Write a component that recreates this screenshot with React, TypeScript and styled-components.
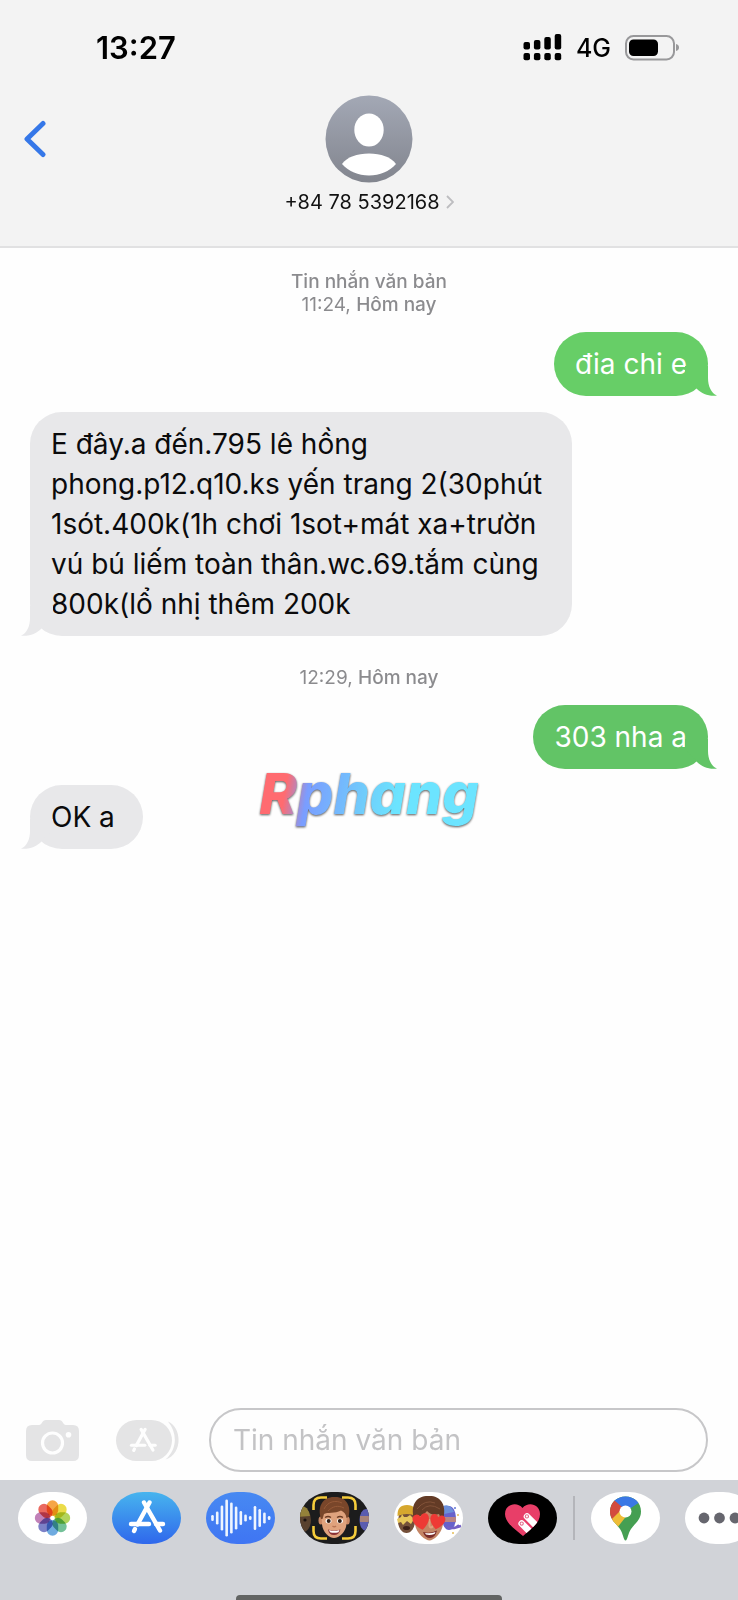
import React from "react";
import styled, { createGlobalStyle } from "styled-components";

const GlobalStyle = createGlobalStyle`
  * { box-sizing: border-box; }
  body { margin: 0; background: #fefefe; }
  button, input { font: inherit; }
`;

const Screen = styled.div`
  position: relative;
  display: flex;
  flex-direction: column;
  min-height: 100vh;
  overflow: hidden;
  background: #fefefe;
  color: #0b0b0c;
  font-family: Inter, "Liberation Sans", sans-serif;
`;

const Header = styled.header`
  display: flex;
  flex-direction: column;
  background: #f3f3f3;
  border-bottom: 2px solid #e1e1e2;
  padding-bottom: 32px;
`;

const StatusBar = styled.div`
  display: flex;
  align-items: center;
  justify-content: space-between;
  height: 95px;
  padding: 0 58px 0 96px;
`;

const Clock = styled.time`
  font-size: 31px;
  line-height: 36px;
  font-weight: 600;
  color: #000;
`;

const StatusIcons = styled.div`
  display: flex;
  align-items: center;
  gap: 14px;
`;

const Network = styled.span`
  font-size: 25px;
  line-height: 36px;
  font-weight: 500;
  color: #000;
`;

const ContactBar = styled.div`
  display: grid;
  grid-template-columns: 1fr auto 1fr;
  align-items: start;
`;

const IconButton = styled.button`
  display: flex;
  flex: none;
  padding: 0;
  border: 0;
  background: none;
  cursor: pointer;
`;

const BackButton = styled(IconButton)`
  margin: 25px 0 0 23px;
  justify-self: start;
`;

const Contact = styled.button`
  display: flex;
  flex-direction: column;
  align-items: center;
  gap: 7px;
  padding: 0;
  border: 0;
  background: none;
  color: #111;
  cursor: pointer;
`;

const ContactName = styled.span`
  display: flex;
  align-items: center;
  gap: 6px;
  font-size: 20px;
  line-height: 24px;
`;

const Thread = styled.main`
  display: flex;
  flex: 1;
  flex-direction: column;
  gap: 16px;
  padding: 22px 30px;
`;

const Stamp = styled.p<{ $spaced?: boolean }>`
  margin: ${(p) => (p.$spaced ? "14px 0 0" : "0")};
  text-align: center;
  font-size: 19px;
  line-height: 23px;
  color: #8b8b8e;
`;

const Strong = styled.span`
  font-weight: 500;
`;

const Bubble = styled.div<{ $sent?: boolean; $tone: string }>`
  position: relative;
  align-self: ${(p) => (p.$sent ? "flex-end" : "flex-start")};
  min-width: 113px;
  max-width: 80%;
  padding: 12px 21px;
  border-radius: 32px;
  background: ${(p) => p.$tone};
  color: ${(p) => (p.$sent ? "#fff" : "#0b0b0c")};
  font-size: 28px;
  line-height: 40px;
`;

const Tail = styled.svg<{ $sent?: boolean }>`
  position: absolute;
  bottom: 0;
  ${(p) => (p.$sent ? "right: -9px;" : "left: -9px; transform: scaleX(-1);")}
`;

const Watermark = styled.div`
  position: absolute;
  inset: 0;
  display: flex;
  align-items: center;
  justify-content: center;
  padding-bottom: 12px;
  pointer-events: none;
`;

const WatermarkText = styled.span`
  padding: 0 8px;
  font-size: 57px;
  line-height: 72px;
  font-weight: 800;
  font-style: italic;
  color: transparent;
  background: linear-gradient(100deg, #ff6b70 16%, #7a9dff 25%, #6fd0fb 50%, #6ce4ff 62%);
  background-clip: text;
  -webkit-background-clip: text;
  filter: drop-shadow(0 1px 1px #555);
`;

const Composer = styled.form`
  display: flex;
  align-items: center;
  padding: 0 30px 8px 26px;
`;

const CameraButton = styled(IconButton)`
  margin-right: 37px;
`;

const AppsButton = styled(IconButton)`
  margin-right: 29px;
`;

const MessageInput = styled.input`
  flex: 1;
  min-width: 0;
  height: 64px;
  padding: 0 22px;
  border: 2px solid #c7c7c9;
  border-radius: 32px;
  background: #fefefe;
  color: #0b0b0c;
  font-size: 28px;
  outline: none;
  &::placeholder { color: #c3c3c5; opacity: 1; }
`;

const Dock = styled.footer`
  display: flex;
  flex-direction: column;
  justify-content: space-between;
  height: 120px;
  padding-top: 12px;
  background: #d1d3d8;
`;

const AppStrip = styled.nav`
  display: flex;
  align-items: center;
  gap: 25px;
  padding-left: 18px;
  overflow: hidden;
`;

const AppButton = styled.button<{ $fill: string }>`
  flex: none;
  width: 69px;
  height: 52px;
  padding: 0;
  border: 0;
  border-radius: 31px / 26px;
  overflow: hidden;
  background: ${(p) => p.$fill};
  cursor: pointer;
  svg { display: block; }
`;

const Divider = styled.span`
  flex: none;
  width: 2px;
  height: 44px;
  margin: 0 -9px;
  background: #b4b5ba;
`;

const HomeIndicator = styled.div`
  align-self: center;
  width: 36%;
  height: 5px;
  border-radius: 4px 4px 0 0;
  background: #626463;
`;

function BubbleTail({ sent, tone }: { sent?: boolean; tone: string }) {
  return (
    <Tail $sent={sent} width="32" height="30" viewBox="0 0 32 30" aria-hidden="true">
      <path d="M23 0V12C23 20 26 27 32 29.6C24 30.6 17 28 12 23L0 10V0Z" fill={tone} />
    </Tail>
  );
}

function Message({ sent, tone, children }: { sent?: boolean; tone: string; children: React.ReactNode }) {
  return (
    <Bubble $sent={sent} $tone={tone}>
      {children}
      <BubbleTail sent={sent} tone={tone} />
    </Bubble>
  );
}

const SIGNAL_TOPS = [9, 7, 4, 1];

function Signal() {
  return (
    <svg width="39" height="30" viewBox="0 0 39 30" aria-label="Signal">
      {SIGNAL_TOPS.map((top, i) => (
        <g key={i}>
          <rect x={i * 10.4 + 0.5} y={top} width="6.5" height={16.6 - top} rx="2" />
          <rect x={i * 10.4 + 0.5} y="20" width="6.5" height="7.3" rx="2" />
        </g>
      ))}
    </svg>
  );
}

function Battery() {
  return (
    <svg width="55" height="26" viewBox="0 0 55 26" aria-label="Battery">
      <rect x="1" y="1" width="48" height="23.5" rx="7.5" fill="none" stroke="#98989a" strokeWidth="2" />
      <rect x="4" y="4.5" width="29" height="16.5" rx="4.5" />
      <path d="M51 9C55 9.6 55 15.4 51 16Z" fill="#98989a" />
    </svg>
  );
}

function Avatar() {
  return (
    <svg width="88" height="88" viewBox="0 0 88 88" aria-hidden="true">
      <defs>
        <linearGradient id="avatar" x1="0" y1="0" x2="0" y2="1">
          <stop offset="0" stopColor="#a3a8b5" />
          <stop offset="1" stopColor="#82858e" />
        </linearGradient>
      </defs>
      <circle cx="44" cy="44" r="43.5" fill="url(#avatar)" />
      <ellipse cx="44" cy="35" rx="14.7" ry="16.5" fill="#fff" />
      <path d="M17 69C22 62 32 58.5 44 58.5S66 62 71 69C64 76.5 55 80.5 44 80.5S24 76.5 17 69Z" fill="#fff" />
    </svg>
  );
}

function AppStoreStrokes({ width, color }: { width: number; color: string }) {
  return (
    <g stroke={color} strokeWidth={width} strokeLinecap="round" fill="none">
      <path d="M20.5 2.5L8.5 24.5" />
      <path d="M15 2.5L31 30.5" />
      <path d="M2 24H20" />
      <path d="M27 24H34" />
      <path d="M6 29L5 31" />
    </g>
  );
}

function CameraIcon() {
  return (
    <svg width="53" height="41" viewBox="0 0 53 41" aria-hidden="true">
      <path d="M6 5H13C16 5 16 0 20 0H33C37 0 37 5 40 5H47Q53 5 53 11V35Q53 41 47 41H6Q0 41 0 35V11Q0 5 6 5Z" fill="#e4e4e5" />
      <circle cx="26.5" cy="23" r="10" fill="none" stroke="#fefefe" strokeWidth="3.2" />
      <circle cx="42.5" cy="14.8" r="2.8" fill="#fefefe" />
    </svg>
  );
}

function AppsIcon() {
  return (
    <svg width="64" height="41" viewBox="0 0 64 41" aria-hidden="true">
      <rect width="56" height="41" rx="20.5" fill="#e4e4e5" />
      <path d="M52 1.5C66 7 67 34 49.5 39.5C61.5 29 61.5 13 52 1.5Z" fill="#e4e4e5" />
      <g transform="translate(14 7.5) scale(.74)">
        <AppStoreStrokes width={4.3} color="#fefefe" />
      </g>
    </svg>
  );
}

const PETALS = ["#f59a2c", "#e9d72f", "#a7ce45", "#5fb98a", "#5b9fdc", "#6a6fc0", "#b96fae", "#e8544a"];

const Petal = styled.rect`
  mix-blend-mode: multiply;
`;

function PhotosIcon() {
  return (
    <svg width="69" height="52" viewBox="0 0 69 52" aria-hidden="true">
      {PETALS.map((color, i) => (
        <Petal key={color} x="28.8" y="8.3" width="11.4" height="15.6" rx="5.7" fill={color} opacity=".88"
          transform={`rotate(${i * 45} 34.5 26)`} />
      ))}
      <circle cx="34.5" cy="26" r="1.2" fill="#fff" />
    </svg>
  );
}

function StoreIcon() {
  return (
    <svg width="69" height="52" viewBox="0 0 69 52" aria-hidden="true">
      <g transform="translate(17 8)">
        <AppStoreStrokes width={4.4} color="#fff" />
      </g>
    </svg>
  );
}

const WAVE = [6, 13, 25, 37, 31, 23, 14, 7, 4, 24, 18, 11, 4];

function WaveIcon() {
  return (
    <svg width="69" height="52" viewBox="0 0 69 52" aria-hidden="true">
      {WAVE.map((h, i) => (
        <rect key={i} x={5.2 + i * 4.72} y={26 - h / 2} width="2.6" height={h} rx="1.3" fill="#eef5ff" />
      ))}
    </svg>
  );
}

function MemojiCameraIcon() {
  return (
    <svg width="69" height="52" viewBox="0 0 69 52" aria-hidden="true">
      <ellipse cx="3" cy="28" rx="8" ry="12" fill="#59412e" />
      <path d="M-2 14Q8 12 10 24L-2 25Z" fill="#94813a" />
      <circle cx="5" cy="28" r="1.6" fill="#1b1310" />
      <ellipse cx="66" cy="28" rx="6.5" ry="11" fill="#5a5cb0" />
      <path d="M60 24H69V30H60Z" fill="#a88379" />
      <ellipse cx="20.8" cy="28.5" rx="2.3" ry="4" fill="#c98763" />
      <ellipse cx="47.5" cy="28.5" rx="2.3" ry="4" fill="#c98763" />
      <path d="M21.5 20Q34 10 47 20L46.5 32C46 40 39 46 34 46S22.5 40 22 32Z" fill="#dfa27d" />
      <path d="M21 27C17 14 23 5 34 5C45 4 52 13 48.5 25L46.5 26C46 22 44 20 41 18.5C35 22 27 20 24 22L22.5 27Z" fill="#79462a" />
      <path d="M24 17C28 9 36 8 42 11M28 19C33 14 38 13 44 16" stroke="#965a39" strokeWidth="1" fill="none" />
      <path d="M25 25.5Q28 23.5 31 25.5M37 25.5Q40 23.5 43 25.5" stroke="#6a3b24" strokeWidth="1.3" fill="none" />
      <ellipse cx="28.5" cy="29" rx="3" ry="2.3" fill="#fff" />
      <ellipse cx="40" cy="29" rx="3" ry="2.3" fill="#fff" />
      <circle cx="28.7" cy="29" r="2" fill="#2e1b13" />
      <circle cx="39.8" cy="29" r="2" fill="#2e1b13" />
      <path d="M32.5 34Q34.3 35.5 36 34" stroke="#b87555" strokeWidth="1.4" fill="none" />
      <path d="M28 37.5Q34 39.5 40.5 37.5Q39 43 34 43T28 37.5Z" fill="#8a3136" />
      <path d="M29 38Q34 39.7 39.5 38L38.5 40.2Q34 41.3 30 40.2Z" fill="#fff" />
      <path d="M13.5 18V13Q13.5 5.5 21 5.5H27M42 5.5H48Q55.5 5.5 55.5 13V18M55.5 34V39Q55.5 46.5 48 46.5H42M27 46.5H21Q13.5 46.5 13.5 39V34" stroke="#f5cc3b" strokeWidth="2.6" fill="none" />
    </svg>
  );
}

const HEART = "M0 6C-10 -1 -8 -8 -3.5 -8Q-1 -8 0 -5.5Q1 -8 3.5 -8C8 -8 10 -1 0 6Z";

function MemojiStickersIcon() {
  return (
    <svg width="69" height="52" viewBox="0 0 69 52" aria-hidden="true">
      <ellipse cx="12.5" cy="29" rx="8.5" ry="12" fill="#74503a" />
      <path d="M3.5 24Q3 13 13 13T22 24Q13 20 3.5 24Z" fill="#d6a72e" />
      <path d="M3 27L7 25L8 22L10 25L13 25L16 23L20 27L17 32L13 29L9 33L7 30L4 31Z" fill="#e7c75b" />
      <ellipse cx="12.5" cy="36" rx="3.5" ry="2" fill="#3c2019" />
      <ellipse cx="55" cy="26" rx="7" ry="12" fill="#6862cb" />
      <path d="M49 14Q56 11 60 20L50 22Z" fill="#6c90db" />
      <path d="M50 25H62V30H50Z" fill="#ba8585" />
      <path d="M53 35Q61 38 65 33M60 36L67 34" stroke="#7460c6" strokeWidth="2.4" fill="none" />
      <circle cx="61" cy="16" r="1" fill="#6275d3" />
      <circle cx="64" cy="23" r="1" fill="#e5bd57" />
      <circle cx="59" cy="41" r="1" fill="#e5bd57" />
      <path d="M21 22Q34 14 49 22V32C48 42 39 48.5 35.5 48.5S22 42 21 32Z" fill="#c48565" />
      <path d="M20 27C16 12 23 4 34 4C45 3 53 11 49.5 26L47 27L45 22C40 24 36 22 33 19C30 23 25 25 22 25Z" fill="#633b26" />
      <path d="M23 17Q31 7 41 11M28 18Q35 10 46 17" stroke="#825239" strokeWidth="1" fill="none" />
      <path d="M35.5 27V34Q36.5 37 39 34" fill="none" stroke="#dfa17f" strokeWidth="2" />
      <path d={HEART} transform="translate(27.5 31) rotate(-10) scale(1.15)" fill="#ee3935" />
      <path d={HEART} transform="translate(43 31) rotate(12) scale(1.05)" fill="#ee3935" />
      <path d="M29 40Q36 42 43 38.5Q41 46 36 46T29 40Z" fill="#792b29" />
      <path d="M31 41Q37 42 41.5 40L40.5 42Q36 43.5 32 42.5Z" fill="#fff" />
    </svg>
  );
}

function HeartTouchIcon() {
  return (
    <svg width="69" height="52" viewBox="0 0 69 52" aria-hidden="true">
      <defs>
        <clipPath id="heart-shape">
          <path d="M35 44C28 38 17 31 17 22C17 12 29 9 34.5 16C40 9 52 12 52 22C52 31 43 37 35 44Z" />
        </clipPath>
      </defs>
      <g clipPath="url(#heart-shape)">
        <rect width="69" height="52" fill="#e83e68" />
        <g stroke="#fff" strokeWidth="6.6" strokeLinecap="round">
          <path d="M39 24.5L52 37.5M33.7 31.5L46 44" />
        </g>
      </g>
      <g fill="#fff" stroke="#e56a89" strokeWidth="1.1">
        <circle cx="38.9" cy="24.4" r="1.6" />
        <circle cx="33.7" cy="31.6" r="1.6" />
      </g>
    </svg>
  );
}

function MapsIcon() {
  return (
    <svg width="69" height="52" viewBox="0 0 69 52" aria-hidden="true">
      <defs>
        <clipPath id="map-pin">
          <path d="M34.5 4.5C43.5 4.5 50 11 50 19.5C50 28 44 31 40 37C37 41 36.5 48.5 34.5 48.5S32 41 29 37C25 31 19 28 19 19.5C19 11 25.5 4.5 34.5 4.5Z" />
        </clipPath>
      </defs>
      <g clipPath="url(#map-pin)">
        <rect width="69" height="52" fill="#459f52" />
        <path d="M20 2H47L49 10L34.5 19.5L22 9Z" fill="#3b78e5" />
        <path d="M17 8L23.5 8.5L34.5 18L21 31L16 25Z" fill="#d34b3e" />
        <path d="M32 16L37 22L26 36L18 30Z" fill="#efbd37" />
      </g>
      <circle cx="34.5" cy="19.5" r="6" fill="#fff" />
    </svg>
  );
}

function MoreIcon() {
  return (
    <svg width="69" height="52" viewBox="0 0 69 52" aria-hidden="true">
      {[19, 34.5, 50].map((cx) => <circle key={cx} cx={cx} cy="26" r="5.4" fill="#66666e" />)}
    </svg>
  );
}

const APPS = [
  { name: "Photos", fill: "#fff", Icon: PhotosIcon },
  { name: "App Store", fill: "linear-gradient(#47b4ee, #2f67ec)", Icon: StoreIcon },
  { name: "Audio", fill: "linear-gradient(#4789f2, #3f75f3)", Icon: WaveIcon },
  { name: "Memoji", fill: "#1c1c1d", Icon: MemojiCameraIcon },
  { name: "Memoji stickers", fill: "#fff", Icon: MemojiStickersIcon },
  { name: "Digital Touch", fill: "#000", Icon: HeartTouchIcon },
];

export default function App() {
  return (
    <Screen>
      <GlobalStyle />
      <Header>
        <StatusBar>
          <Clock>13:27</Clock>
          <StatusIcons>
            <Signal />
            <Network>4G</Network>
            <Battery />
          </StatusIcons>
        </StatusBar>
        <ContactBar>
          <BackButton type="button" aria-label="Back">
            <svg width="24" height="38" viewBox="0 0 24 38" aria-hidden="true">
              <path d="M20 3.5L4 19L20 34.5" fill="none" stroke="#3577e8" strokeWidth="5" strokeLinecap="round" strokeLinejoin="round" />
            </svg>
          </BackButton>
          <Contact type="button">
            <Avatar />
            <ContactName>
              +84 78 5392168
              <svg width="8" height="14" viewBox="0 0 8 14" aria-hidden="true">
                <path d="M1 1L7 7L1 13" fill="none" stroke="#bdbdc0" strokeWidth="1.8" />
              </svg>
            </ContactName>
          </Contact>
        </ContactBar>
      </Header>

      <Thread>
        <Stamp>
          <Strong>Tin nhắn văn bản</Strong>
          <br />
          11:24, <Strong>Hôm nay</Strong>
        </Stamp>
        <Message sent tone="#67ce67">đia chi e</Message>
        <Message tone="#e8e8ea">
          E đây.a đến.795 lê hồng phong.p12.q10.ks yến trang 2(30phút 1sót.400k(1h chơi 1sot+mát xa+trườn vú bú liếm toàn thân.wc.69.tắm cùng 800k(lổ nhị thêm 200k
        </Message>
        <Stamp $spaced>
          12:29, <Strong>Hôm nay</Strong>
        </Stamp>
        <Message sent tone="#62c466">303 nha a</Message>
        <Message tone="#e8e8ea">OK a</Message>
      </Thread>

      <Composer onSubmit={(e) => e.preventDefault()}>
        <CameraButton type="button" aria-label="Camera"><CameraIcon /></CameraButton>
        <AppsButton type="button" aria-label="Apps"><AppsIcon /></AppsButton>
        <MessageInput type="text" aria-label="Tin nhắn văn bản" placeholder="Tin nhắn văn bản" />
      </Composer>

      <Dock>
        <AppStrip aria-label="Apps">
          {APPS.map(({ name, fill, Icon }) => (
            <AppButton key={name} type="button" aria-label={name} $fill={fill}><Icon /></AppButton>
          ))}
          <Divider />
          <AppButton type="button" aria-label="Google Maps" $fill="#fff"><MapsIcon /></AppButton>
          <AppButton type="button" aria-label="More" $fill="#fff"><MoreIcon /></AppButton>
        </AppStrip>
        <HomeIndicator />
      </Dock>

      <Watermark>
        <WatermarkText>Rphang</WatermarkText>
      </Watermark>
    </Screen>
  );
}
